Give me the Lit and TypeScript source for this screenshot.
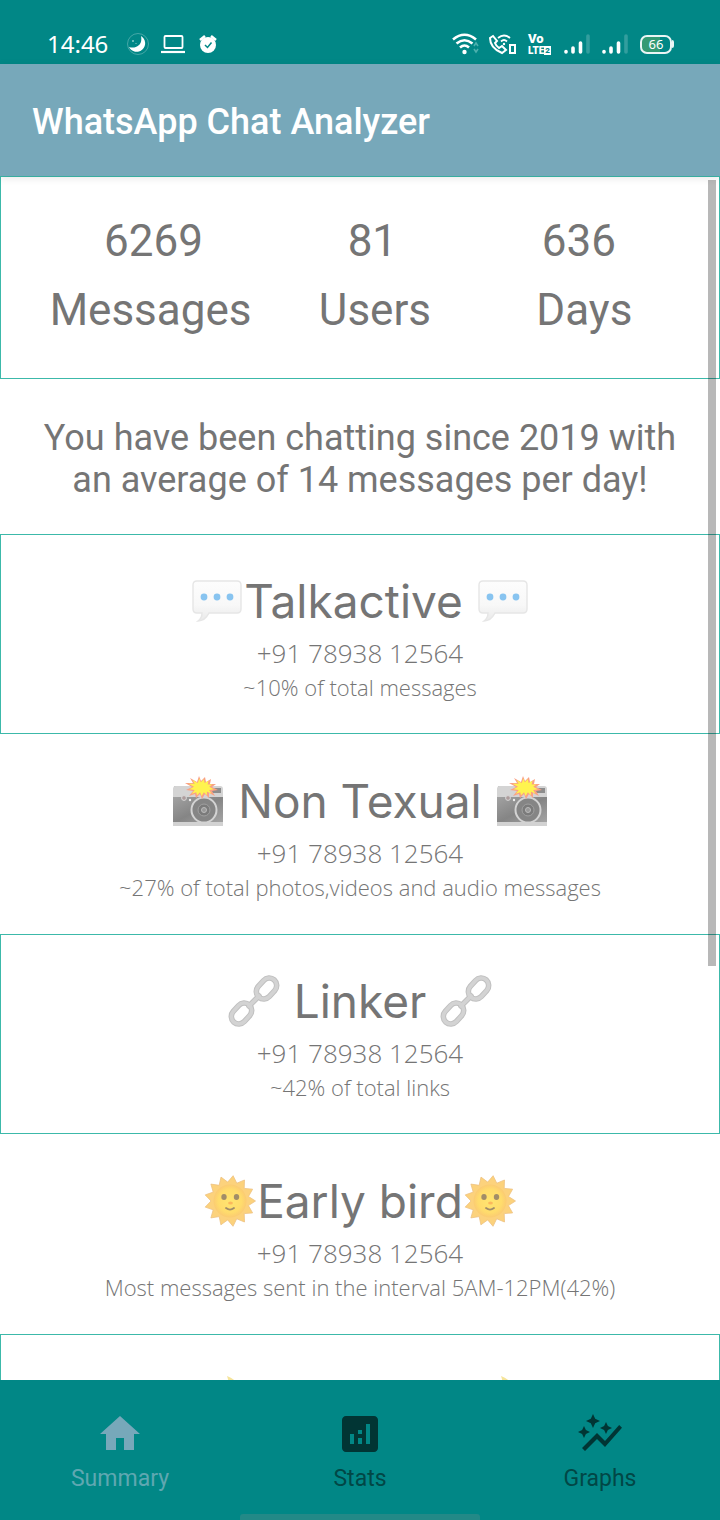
import { LitElement, html, css, svg, nothing } from "lit";
import { customElement } from "lit/decorators.js";
import { classMap } from "lit/directives/class-map.js";

const burst =
  "M30 0 L32 5 L36 1 L37 6 L42 3 L41 8 L47 8 L43 11 L49 14 L43 15 L46 20 L40 17 L40 22 L36 18 L33 23 L31 18 L27 22 L26 18 L20 20 L24 15 L17 14 L23 11 L16 7 L24 7 L21 2 L28 6 Z";

const sunRays = Array.from({ length: 26 }, (_, i) => {
  const angle = ((i * 360) / 26 - 83) * (Math.PI / 180);
  const radius = i % 2 ? 19 : 25.5;
  return `${(26 + radius * Math.cos(angle)).toFixed(1)},${(26 + radius * Math.sin(angle)).toFixed(1)}`;
}).join(" ");

const chain = svg`
  <rect x="27" y="6" width="23" height="15" rx="7.500" transform="rotate(-48 38.500 13.500)"/>
  <rect x="2" y="31" width="23" height="15" rx="7.500" transform="rotate(-48 13.500 38.500)"/>
  <path d="M21 31L31 21" stroke-linecap="round"/>`;

const emoji = {
  bubble: svg`
    <defs><linearGradient id="b" x1="0" y1="0" x2="0" y2="1"><stop offset="0" stop-color="#fdfdfd"/><stop offset=".6" stop-color="#f8f8f8"/><stop offset="1" stop-color="#e9e9e9"/></linearGradient></defs>
    <path d="M6 6h40q4 0 4 4v24q0 4-4 4H18c-2 4-5 8-11 8 3-2 4-4 4-8H6q-4 0-4-4V10q0-4 4-4z" fill="url(#b)" stroke="#e6e6e6" stroke-width="1.400"/>
    <g fill="#88c4f0"><circle cx="13" cy="22" r="3.400"/><circle cx="26" cy="22" r="3.400"/><circle cx="39" cy="22" r="3.400"/></g>`,
  camera: svg`
    <defs><linearGradient id="c" x1="0" y1="0" x2="1" y2="1"><stop offset="0" stop-color="#a2a2a2"/><stop offset=".5" stop-color="#858585"/><stop offset="1" stop-color="#a5a5a5"/></linearGradient></defs>
    <path d="M2 11h14v3H2z" fill="#c4c4c4"/><path d="M1 14q0-3 3-3h44q3 0 3 3v10H1z" fill="#d4d4d4"/>
    <path d="M36 13h13v5H36z" fill="#8d8d8d"/>
    <path d="M1 22h50v26H1z" fill="url(#c)"/><path d="M1 47h50v4H1z" fill="#d2d2d2"/>
    <circle cx="12" cy="23" r="2.400" fill="#ad9c9c" stroke="#d8d8d8"/><circle cx="18" cy="25" r="1.200" fill="#eee"/>
    <circle cx="32" cy="35" r="12.500" fill="#858585" stroke="#d3d3d3" stroke-width="2"/>
    <circle cx="32" cy="35" r="6" fill="#7b7b7b" stroke="#a0a0a0"/><circle cx="32" cy="35" r="2.500" fill="#999" stroke="#bbb"/>
    <path d=${burst} fill="#f9a184" transform="translate(-3 1)"/><path d=${burst} fill="#fff34f" transform="translate(4.500 3.500) scale(.76)"/>`,
  link: svg`<g fill="none"><g stroke="#c0c0c0" stroke-width="5.600">${chain}</g><g stroke="#d3d3d3" stroke-width="3.600">${chain}</g></g>`,
  sun: svg`
    <defs><radialGradient id="s"><stop offset="0" stop-color="#ffe56f"/><stop offset=".7" stop-color="#ffdc6c"/><stop offset="1" stop-color="#fbcb72"/></radialGradient></defs>
    <polygon points=${sunRays} fill="#fcd27c" stroke="#eec283" stroke-width=".8"/>
    <circle cx="26" cy="26" r="16.500" fill="url(#s)"/>
    <ellipse cx="20" cy="22" rx="2.700" ry="3" fill="#a18d68"/><ellipse cx="32.500" cy="22" rx="2.700" ry="3" fill="#a18d68"/>
    <ellipse cx="26.500" cy="28" rx="2.400" ry="1.500" fill="#fcb85c"/>
    <path d="M22 33q4 3.200 8 0" fill="none" stroke="#a18d68" stroke-width="1.800" stroke-linecap="round"/>`,
  moon: svg`<path d="M30 3C47 10 51 26 41 40 33 50 16 52 6 44 24 44 38 26 30 3z" fill="#f5e49a"/>`,
};

type Emoji = keyof typeof emoji;

interface Award {
  icon: Emoji;
  title?: string;
  phone?: string;
  detail?: string;
  outlined?: boolean;
}

const awards: Award[] = [
  { icon: "bubble", title: "Talkactive ", phone: "+91 78938 12564", detail: "~10% of total messages", outlined: true },
  { icon: "camera", title: " Non Texual ", phone: "+91 78938 12564", detail: "~27% of total photos,videos and audio messages" },
  { icon: "link", title: " Linker ", phone: "+91 78938 12564", detail: "~42% of total links", outlined: true },
  { icon: "sun", title: "Early bird", phone: "+91 78938 12564", detail: "Most messages sent in the interval 5AM-12PM(42%)" },
  { icon: "moon", outlined: true },
];

const tabs = [
  { label: "Summary", path: "M10 20v-6h4v6h5v-8h3L12 3 2 12h3v8z" },
  {
    label: "Stats",
    path: "M19 3H5c-1.100 0-2 .9-2 2v14c0 1.100.9 2 2 2h14c1.100 0 2-.9 2-2V5c0-1.100-.9-2-2-2zM9 17H7v-5h2v5zm4 0h-2v-3h2v3zm0-5h-2v-2h2v2zm4 5h-2V7h2v10z",
  },
  {
    label: "Graphs",
    path: "M14.060 9.940L12 9l2.060-.94L15 6l.94 2.060L18 9l-2.060.94L15 12l-.94-2.060zM4 14l.94-2.060L7 11l-2.060-.94L4 8l-.94 2.060L1 11l2.060.94L4 14zm4.500-5l1.090-2.410L12 5.500 9.590 4.410 8.500 2 7.410 4.410 5 5.500l2.410 1.090L8.500 9zm-4 11.500l6-6.010 4 4L23 8.930l-1.410-1.410-7.090 7.970-4-4L3 19l1.500 1.500z",
  },
];

@customElement("status-bar")
class StatusBar extends LitElement {
  static styles = css`
    :host { display: flex; justify-content: space-between; align-items: center; height: 64px; box-sizing: border-box; padding: 24px 46px 0 47px; background: #018786; color: #fff; font-family: "Noto Sans", sans-serif; }
    .side { display: flex; align-items: center; }
    .time { font-size: 24px; line-height: 24px; margin-right: 18px; }
    svg { display: block; }
    .volte { width: 24px; margin: 0 11px 0 12px; font-family: Roboto, sans-serif; font-weight: 900; }
    .vo { display: block; font-size: 13px; line-height: 12px; }
    .lte { display: flex; align-items: center; font-size: 10px; line-height: 11px; }
    .box { background: #fff; color: #018786; font-size: 8px; line-height: 9px; padding: 0 1px; }
    .battery { display: flex; align-items: center; margin-left: 1px; }
    .level { width: 32px; height: 19px; box-sizing: border-box; border: 2px solid #eaf5f5; border-radius: 7px; background: linear-gradient(90deg, #349a74 66%, #018786 66%); font-size: 13px; line-height: 15px; text-align: center; }
    .nub { width: 2px; height: 8px; border-radius: 0 2px 2px 0; background: #eaf5f5; }
  `;

  private bars() {
    return html`<svg width="38" height="24" viewBox="0 0 38 24">
      <g stroke="#fff" stroke-width="3.600" stroke-linecap="round"><path d="M3 19.500v.5M10 16v4M17.500 11v9"/><path d="M25 4v16" stroke="#329e9e"/></g>
    </svg>`;
  }

  render() {
    return html`
      <div class="side">
        <span class="time">14:46</span>
        <svg width="94" height="24" viewBox="0 0 94 24" fill="none" stroke="#fff">
          <circle cx="12" cy="12" r="10.500" stroke="#56afae" stroke-width=".8"/>
          <path d="M15 4a8.500 8.500 0 1 1-12 11C10 17 17 13 15 4z" fill="#fff" stroke="none"/>
          <path d="M7 8v2M6 9h2M10 11v1" stroke="#8accca"/>
          <rect x="38.500" y="4" width="18" height="12" rx="1" stroke-width="1.800"/><path d="M35 20h24" stroke-width="2.200"/>
          <g transform="translate(72 0)"><circle cx="10" cy="13" r="8" fill="#fff" stroke="none"/><path d="M2 8l5-4M13 4l5 4" stroke-width="2.600"/><path d="M7 13l2.500 2.500 4-5" stroke="#018786" stroke-width="1.500"/></g>
        </svg>
      </div>
      <div class="side">
        <svg width="65" height="24" viewBox="0 0 65 24" fill="none" stroke="#fff">
          <g stroke-width="2.600"><path d="M2 7.500Q13.500-2 25 7.500M5.500 11.500Q13.500 5 21.500 11.500M9 15.500Q13.500 11.500 18 15.500"/></g><circle cx="13.500" cy="20" r="2.200" fill="#fff" stroke="none"/>
          <path d="M23 14l2-3 2 3M23 17l2 3 2-3" stroke="#4cb0ad" stroke-width="1.600"/>
          <path d="M42 4l-3 2q0 10 12 15l4-3-4-4-3 2q-3-2-4-5l2-2z" stroke-width="2"/>
          <path d="M47 6q6-5 12 0M50 9.500q3-3 6 0" stroke-width="1.800"/><circle cx="53" cy="12" r="1.200" fill="#fff" stroke="none"/>
          <rect x="59" y="13" width="5" height="8" stroke-width="2"/>
        </svg>
        <div class="volte"><span class="vo">Vo</span><span class="lte">LTE<span class="box">2</span></span></div>
        ${this.bars()}${this.bars()}
        <div class="battery"><span class="level">66</span><span class="nub"></span></div>
      </div>`;
  }
}

@customElement("award-card")
class AwardCard extends LitElement {
  static properties = { award: { attribute: false } };
  declare award: Award;

  static styles = css`
    :host { display: block; }
    .card { box-sizing: border-box; min-height: 200px; padding: 38px 16px 30px; border: 1px solid transparent; text-align: center; color: #757575; }
    .outlined { border-color: #3cb9aa; }
    .title { display: flex; justify-content: center; align-items: center; margin: 0; font: 400 46px/56px Inter, sans-serif; white-space: pre; }
    .emoji { flex: none; width: 52px; height: 52px; margin: 0 1px; }
    .spacer { width: 220px; }
    .phone, .detail { margin: 0; font-family: "Open Sans", sans-serif; font-weight: 300; }
    .phone { font-size: 26px; line-height: 40px; margin-top: 4px; }
    .detail { font-size: 22px; line-height: 28px; }
  `;

  private glyph() {
    return html`<svg class="emoji" viewBox="0 0 52 52" aria-hidden="true">${emoji[this.award.icon]}</svg>`;
  }

  render() {
    const { title, phone, detail, outlined } = this.award;
    return html`<section class=${classMap({ card: true, outlined: !!outlined })}>
      <h2 class="title">${this.glyph()}${title ? html`<span>${title}</span>` : html`<span class="spacer"></span>`}${this.glyph()}</h2>
      ${phone ? html`<p class="phone">${phone}</p>` : nothing}
      ${detail ? html`<p class="detail">${detail}</p>` : nothing}
    </section>`;
  }
}

@customElement("app-root")
class AppRoot extends LitElement {
  static properties = { active: { state: true } };
  declare active: number;

  constructor() {
    super();
    this.active = 0;
  }

  static styles = css`
    :host { display: flex; flex-direction: column; height: 100vh; background: #fff; font-family: Roboto, sans-serif; color: #757575; }
    status-bar, .appbar, .nav { flex: none; }
    .appbar { position: relative; z-index: 1; display: flex; align-items: center; box-sizing: border-box; height: 112px; padding: 4px 32px 0; background: #77a8ba; box-shadow: 0 2px 8px rgba(0, 0, 0, 0.1); }
    .appbar h1 { margin: 0; font-size: 36px; line-height: 48px; font-weight: 500; color: #fff; }
    .body { position: relative; flex: 1; min-height: 0; overflow: hidden; }
    .totals { box-sizing: border-box; padding: 30px 0 33px; border: 1px solid #3cb9aa; font-size: 44px; line-height: 69px; }
    .numbers { display: flex; justify-content: space-between; padding: 0 103px; }
    .labels { display: grid; grid-template-columns: 10fr 5fr 9fr; text-align: center; }
    .intro { margin: 0; padding: 38px 32px 33px; font-size: 36px; line-height: 42px; text-align: center; }
    .thumb { position: absolute; top: 4px; right: 4px; width: 8px; height: 65.3%; background: rgba(0, 0, 0, 0.28); }
    .nav { display: grid; grid-template-columns: repeat(3, 1fr); height: 140px; position: relative; background: #018786; }
    .tab { display: flex; flex-direction: column; align-items: center; gap: 7px; padding: 30px 0 0; border: 0; background: none; font: 400 23px/28px Roboto, sans-serif; color: #014746; cursor: pointer; }
    .tab svg { width: 48px; height: 48px; fill: #013534; }
    .selected { color: #5fa7b1; }
    .selected svg { fill: #77a8ba; }
    .handle { position: absolute; bottom: 0; left: 33.333%; right: 33.333%; height: 6px; border-radius: 3px 3px 0 0; background: #238987; }
  `;

  render() {
    return html`
      <status-bar></status-bar>
      <header class="appbar"><h1>WhatsApp Chat Analyzer</h1></header>
      <main class="body">
        <section class="totals">
          <div class="numbers"><span>6269</span><span>81</span><span>636</span></div>
          <div class="labels"><span>Messages</span><span>Users</span><span>Days</span></div>
        </section>
        <p class="intro">You have been chatting since 2019 with an average of 14 messages per day!</p>
        ${awards.map((award) => html`<award-card .award=${award}></award-card>`)}
        <div class="thumb"></div>
      </main>
      <nav class="nav">
        ${tabs.map(
          (tab, i) => html`<button class=${classMap({ tab: true, selected: i === this.active })} @click=${() => (this.active = i)}>
            <svg viewBox="0 0 24 24" aria-hidden="true"><path d=${tab.path}/></svg>
            <span>${tab.label}</span>
          </button>`,
        )}
        <div class="handle"></div>
      </nav>`;
  }
}
